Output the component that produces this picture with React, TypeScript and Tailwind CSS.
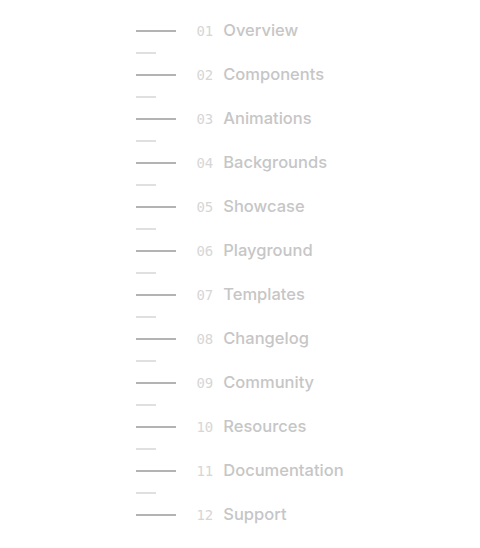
import React from "react";

type Section = {
  id: string;
  title: string;
};

const sections: Section[] = [
  { id: "01", title: "Overview" },
  { id: "02", title: "Components" },
  { id: "03", title: "Animations" },
  { id: "04", title: "Backgrounds" },
  { id: "05", title: "Showcase" },
  { id: "06", title: "Playground" },
  { id: "07", title: "Templates" },
  { id: "08", title: "Changelog" },
  { id: "09", title: "Community" },
  { id: "10", title: "Resources" },
  { id: "11", title: "Documentation" },
  { id: "12", title: "Support" },
];

const App = () => {
  return (
    <div className="min-h-screen bg-white flex justify-center pt-5">
      <nav className="flex flex-col">
        {sections.map((section, i) => (
          <React.Fragment key={section.id}>
            <a href="#" className="h-[22px] flex items-center">
              <span className="w-10 h-[2px] bg-[#b3b3b3] mr-5" />
              <span className="text-[14px] leading-none font-medium text-[#d6d6d6] mr-[10px] font-['DejaVu_Sans_Mono',monospace]">
                {section.id}
              </span>
              <span className="text-[16.5px] leading-none font-medium text-[#c6c6c6] font-['Inter',sans-serif] -translate-y-px">
                {section.title}
              </span>
            </a>
            {i < sections.length - 1 && (
              <div className="h-[22px] flex items-center">
                <span className="w-5 h-[2px] bg-[#e0e0e0]" />
              </div>
            )}
          </React.Fragment>
        ))}
      </nav>
    </div>
  );
};

export default App;
